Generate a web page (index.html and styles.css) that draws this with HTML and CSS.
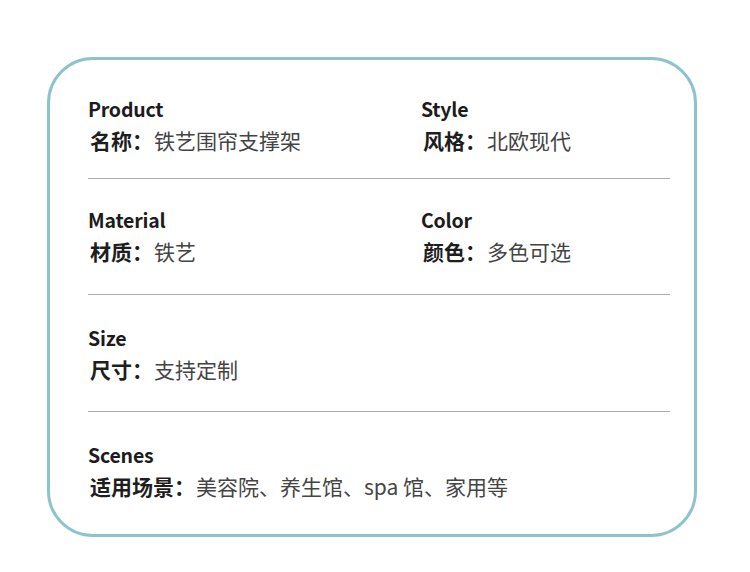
FILE: index.html
```html
<!DOCTYPE html>
<html lang="zh">
<head>
<meta charset="utf-8">
<link rel="stylesheet" href="styles.css">
</head>
<body>
<div class="card">
  <div class="row first">
    <div class="item">
      <div class="en">Product</div>
      <div class="zh"><span class="label">名称：</span><span class="value">铁艺围帘支撑架</span></div>
    </div>
    <div class="item">
      <div class="en">Style</div>
      <div class="zh"><span class="label">风格：</span><span class="value">北欧现代</span></div>
    </div>
  </div>
  <div class="row second">
    <div class="item">
      <div class="en">Material</div>
      <div class="zh"><span class="label">材质：</span><span class="value">铁艺</span></div>
    </div>
    <div class="item">
      <div class="en">Color</div>
      <div class="zh"><span class="label">颜色：</span><span class="value">多色可选</span></div>
    </div>
  </div>
  <div class="row third">
    <div class="item">
      <div class="en">Size</div>
      <div class="zh"><span class="label">尺寸：</span><span class="value">支持定制</span></div>
    </div>
  </div>
  <div class="row last">
    <div class="item">
      <div class="en">Scenes</div>
      <div class="zh"><span class="label">适用场景：</span><span class="value">美容院、养生馆、spa 馆、家用等</span></div>
    </div>
  </div>
</div>
</body>
</html>
```

FILE: styles.css
```css
* { box-sizing: border-box; }
html, body { margin: 0; padding: 0; background: #ffffff; }
body {
  font-family: "Noto Sans CJK SC", "Noto Sans", sans-serif;
  padding: 57px 0 0 47px;
}
.card {
  width: 650px;
  height: 480px;
  border: 3px solid #8ec3ce;
  border-radius: 46px;
  padding: 0 24px 0 38px;
  background: #ffffff;
}
.row {
  display: grid;
  grid-template-columns: 333px 1fr;
  padding: 28px 0 25px;
  border-bottom: 1px solid #acacac;
}
.row.first { padding: 35px 0 21px; }
.row.second { padding: 27px 0 26px; }
.row.third { padding: 29px 0 25px; }
.row.last { padding-top: 29px; border-bottom: none; }
.en {
  font-size: 19.5px;
  line-height: 28px;
  font-weight: 700;
  color: #1c1c1c;
  letter-spacing: -0.2px;
}
.zh {
  font-size: 21px;
  line-height: 34px;
  white-space: nowrap;
}
.label {
  font-weight: 700;
  color: #1e1e1e;
  margin-left: 2px;
}
.value {
  font-weight: 400;
  color: #444444;
  margin-left: 1px;
}
```
